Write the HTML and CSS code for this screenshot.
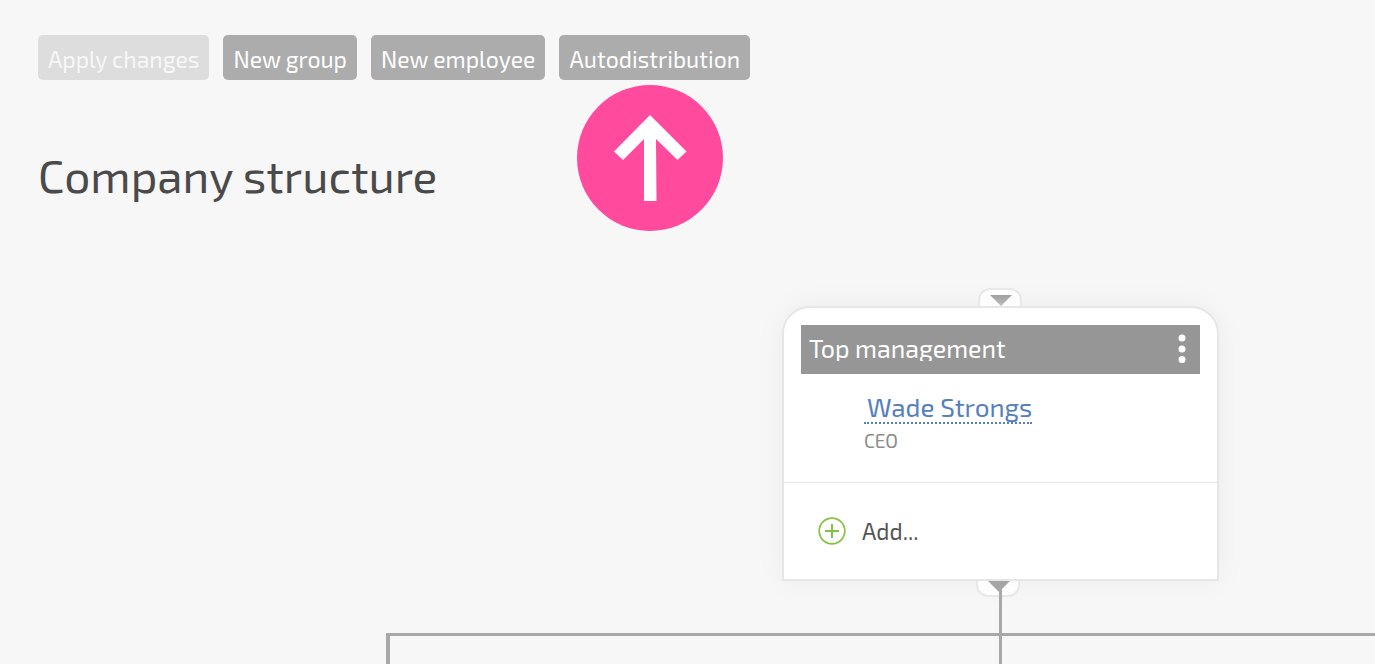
FILE: index.html
```html
<!DOCTYPE html>
<html lang="en">
<head>
<meta charset="utf-8">
<meta name="viewport" content="width=device-width, initial-scale=1">
<title>Company structure</title>
<link rel="stylesheet" href="styles.css">
</head>
<body>
<header class="page-head">
  <div class="toolbar">
    <button class="btn" type="button" disabled>Apply changes</button>
    <button class="btn" type="button">New group</button>
    <button class="btn" type="button">New employee</button>
    <div class="btn-wrap">
      <button class="btn" type="button">Autodistribution</button>
      <svg class="pointer" viewBox="0 0 146 146" aria-hidden="true">
        <circle cx="73" cy="73" r="73" fill="#ff4a9d"/>
        <path d="M73 30 109.500 66.500 100.500 75 79 54 79.500 116H67V54L46 75 37 66.500Z" fill="#fff"/>
      </svg>
    </div>
  </div>
  <h1 class="title">Company structure</h1>
</header>
<main class="chart">
  <div class="branch"></div>
  <div class="trunk"></div>
  <section class="node">
    <button class="tab tab-top" type="button" aria-label="Collapse upper level">
      <svg class="tab-icon" viewBox="0 0 22 11"><defs><linearGradient id="fade" x1="0" y1="0" x2="0" y2="1"><stop offset="0" stop-color="#a0a0a0"/><stop offset="1" stop-color="#bdbdbd"/></linearGradient></defs><path d="M0 0H22L11 11Z" fill="url(#fade)"/></svg>
    </button>
    <div class="group-head">
      <h2 class="group-name">Top management</h2>
      <button class="menu" type="button" aria-label="Group menu">
        <svg class="menu-icon" viewBox="0 0 8 30" fill="#fff"><circle cx="4" cy="4" r="3.500"/><circle cx="4" cy="15" r="3.500"/><circle cx="4" cy="25.500" r="3.500"/></svg>
      </button>
    </div>
    <div class="person">
      <a class="person-name" href="#wade">Wade Strongs</a>
      <span class="role">CEO</span>
    </div>
    <button class="add" type="button">
      <svg class="add-icon" viewBox="0 0 28 28" fill="none" stroke="#82c341"><circle cx="14" cy="14" r="12.800" stroke-width="1.700"/><path d="M14 7V21M7 14H21" stroke-width="2"/></svg>
      <span>Add...</span>
    </button>
    <button class="tab tab-bottom" type="button" aria-label="Collapse lower level">
      <svg class="tab-icon" viewBox="0 0 22 11"><path d="M0 0H22L11 11Z" fill="#a5a5a5"/></svg>
    </button>
  </section>
</main>
</body>
</html>
```
FILE: styles.css
```css
* {
  box-sizing: border-box;
}

body {
  margin: 0;
  min-height: 100vh;
  display: flex;
  flex-direction: column;
  overflow: hidden;
  background: #f7f7f7;
  color: #4a4a4a;
  font-family: "Exo 2", "Roboto", sans-serif;
}

button {
  border: 0;
  background: none;
  font: inherit;
  cursor: pointer;
}

.page-head {
  padding: 35px 38px 0;
}

.toolbar {
  display: flex;
  gap: 14px;
}

.btn {
  display: block;
  height: 45px;
  padding: 2px 10px 0;
  border-radius: 5px;
  background: #acacac;
  color: #fff;
  font-size: 23px;
  line-height: 40px;
  white-space: nowrap;
}

.btn:disabled {
  background: #ddd;
  color: #f7f7f7;
  cursor: default;
}

.btn-wrap {
  position: relative;
}

.pointer {
  position: absolute;
  top: 50px;
  left: 18px;
  width: 146px;
  height: 146px;
}

.title {
  margin: 68px 0 0;
  font-size: 46px;
  font-weight: 400;
  line-height: 54px;
}

.chart {
  position: relative;
  flex: 1;
  min-height: 462px;
}

.node {
  position: absolute;
  top: 104px;
  left: 782px;
  width: 437px;
  padding-top: 17px;
  border: 2px solid #e6e6e6;
  border-radius: 28px 28px 0 0;
  background: #fff;
  box-shadow: 0 0 30px rgba(0, 0, 0, 0.05);
}

.group-head {
  display: flex;
  align-items: center;
  justify-content: space-between;
  height: 49px;
  margin: 0 17px;
  padding: 0 10px 2px 8px;
  background: #969696;
  color: #fff;
}

.group-name {
  margin: 0;
  overflow: hidden;
  font-size: 25px;
  font-weight: 400;
  line-height: 25px;
}

.menu {
  padding: 0 4px;
}

.menu-icon {
  display: block;
  width: 8px;
  height: 30px;
}

.person {
  display: flex;
  flex-direction: column;
  align-items: flex-start;
  gap: 5px;
  height: 109px;
  padding: 18px 80px 0;
  border-bottom: 1px solid #e6e6e6;
}

.person-name {
  padding-left: 3px;
  border-bottom: 2px dotted #5580bd;
  color: #5580bd;
  font-size: 26px;
  line-height: 30px;
  text-decoration: none;
}

.role {
  color: #8c8c8c;
  font-size: 19px;
  line-height: 24px;
}

.add {
  display: flex;
  align-items: center;
  gap: 16px;
  width: 100%;
  height: 96px;
  padding: 0 34px;
  color: #555;
  font-size: 23px;
}

.add-icon {
  width: 28px;
  height: 28px;
}

.tab {
  position: absolute;
  display: flex;
  justify-content: center;
  width: 44px;
  padding: 0 0 0 2px;
  border: 2px solid #e8e8e8;
  background: #fdfdfd;
}

.tab-top {
  bottom: 100%;
  left: 194px;
  height: 18px;
  margin-bottom: 2px;
  padding-top: 5px;
  border-bottom: 0;
  border-radius: 12px 12px 0 0;
}

.tab-bottom {
  top: 100%;
  left: 192px;
  height: 16px;
  margin-top: 2px;
  border-top: 0;
  border-radius: 0 0 12px 12px;
}

.tab-icon {
  width: 22px;
  height: 11px;
}

.trunk {
  position: absolute;
  z-index: 1;
  top: 386px;
  bottom: 0;
  left: 999px;
  width: 3px;
  background: #a8a8a8;
}

.branch {
  position: absolute;
  top: 431px;
  right: 0;
  bottom: 0;
  left: 386px;
  border-top: 3px solid #a8a8a8;
  border-left: 4px solid #a8a8a8;
}
```
